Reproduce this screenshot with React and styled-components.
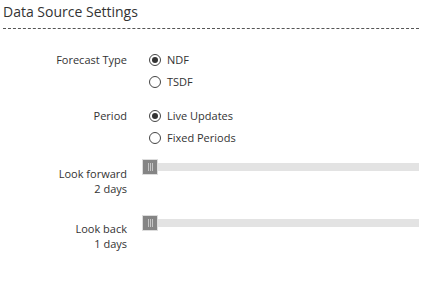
import React, { useState } from 'react';
import styled, { createGlobalStyle } from 'styled-components';

const Global = createGlobalStyle`
  body {
    margin: 0;
    background: #fff;
    font-family: "Open Sans", "Liberation Sans", sans-serif;
    color: #333;
  }
`;

const Panel = styled.div`
  width: 445px;
  height: 285px;
  padding: 0 26px 0 3px;
  box-sizing: border-box;
`;

const Title = styled.h2`
  margin: 0;
  padding-top: 2px;
  font-size: 14px;
  font-weight: 400;
  line-height: 20px;
  color: #333;
  padding-bottom: 6px;
  border-bottom: 1px dashed #555;
`;

const Form = styled.div`
  display: grid;
  grid-template-columns: 124px 1fr;
  column-gap: 22px;
  padding-top: 23px;
`;

const Label = styled.div`
  text-align: right;
  font-size: 11px;
  line-height: 15px;
  margin-top: ${p => p.top || 0}px;
`;

const Options = styled.div`
  display: flex;
  flex-direction: column;
  gap: 7px;
  margin-bottom: ${p => p.bottom || 0}px;
`;

const Option = styled.label`
  display: flex;
  align-items: center;
  gap: 6px;
  font-size: 11px;
  line-height: 15px;
  cursor: pointer;
`;

const Radio = styled.span`
  width: 10px;
  height: 10px;
  border: 1px solid #444;
  border-radius: 50%;
  display: flex;
  align-items: center;
  justify-content: center;
  flex-shrink: 0;

  &::after {
    content: '';
    width: 6px;
    height: 6px;
    border-radius: 50%;
    background: ${p => (p.checked ? '#333' : 'transparent')};
  }
`;

const SliderCell = styled.div`
  position: relative;
  height: 16px;
  margin-left: -7px;
  margin-top: ${p => p.top || 0}px;
`;

const Track = styled.div`
  position: absolute;
  left: 15px;
  right: 0;
  top: 4px;
  height: 8px;
  background: #e3e3e3;
`;

const Handle = styled.div`
  position: absolute;
  left: 0;
  top: 0;
  width: 14px;
  height: 14px;
  background: #858585;
  border: 1px solid #ddd;
  display: flex;
  align-items: center;
  justify-content: center;
  gap: 1px;

  span {
    width: 1px;
    height: 8px;
    background: #c4c4c4;
  }
`;

function RadioGroup({ options, value, onChange, bottom }) {
  return (
    <Options bottom={bottom}>
      {options.map(o => (
        <Option key={o} onClick={() => onChange(o)}>
          <Radio checked={value === o} />
          {o}
        </Option>
      ))}
    </Options>
  );
}

function Slider({ top }) {
  return (
    <SliderCell top={top}>
      <Track />
      <Handle>
        <span />
        <span />
        <span />
      </Handle>
    </SliderCell>
  );
}

export default function App() {
  const [type, setType] = useState('NDF');
  const [period, setPeriod] = useState('Live Updates');

  return (
    <Panel>
      <Global />
      <Title>Data Source Settings</Title>
      <Form>
        <Label>Forecast Type</Label>
        <RadioGroup options={['NDF', 'TSDF']} value={type} onChange={setType} bottom={19} />
        <Label>Period</Label>
        <RadioGroup options={['Live Updates', 'Fixed Periods']} value={period} onChange={setPeriod} bottom={14} />
        <Label top={7}>Look forward<br />2 days</Label>
        <Slider top={0} />
        <Label top={25}>Look back<br />1 days</Label>
        <Slider top={19} />
      </Form>
    </Panel>
  );
}
